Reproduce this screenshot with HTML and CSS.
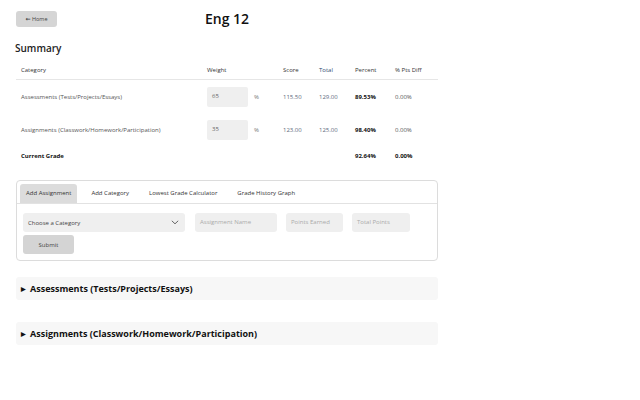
FILE: index.html
```html
<!DOCTYPE html>
<html>
<head>
<meta charset="utf-8">
<link rel="stylesheet" href="styles.css">
</head>
<body>
<div class="page">
  <header class="top">
    <button class="home"><span class="arrow">&#8592;</span> Home</button>
    <h1 class="title">Eng 12</h1>
  </header>
  <h2 class="summary">Summary</h2>
  <table class="grid">
    <colgroup>
      <col class="c1"><col class="c2"><col class="c3"><col class="c4"><col class="c5"><col class="c6">
    </colgroup>
    <thead>
      <tr><th>Category</th><th>Weight</th><th>Score</th><th class="tot">Total</th><th>Percent</th><th>% Pts Diff</th></tr>
    </thead>
    <tbody>
      <tr class="row">
        <td>Assessments (Tests/Projects/Essays)</td>
        <td><span class="wbox">65</span><span class="pct">%</span></td>
        <td class="num">115.50</td><td class="num">129.00</td><td class="b">89.53%</td><td>0.00%</td>
      </tr>
      <tr class="row">
        <td>Assignments (Classwork/Homework/Participation)</td>
        <td><span class="wbox">35</span><span class="pct">%</span></td>
        <td class="num">123.00</td><td class="num">125.00</td><td class="b">98.40%</td><td>0.00%</td>
      </tr>
      <tr class="cur">
        <td class="b">Current Grade</td><td></td><td></td><td></td><td class="b">92.64%</td><td class="b">0.00%</td>
      </tr>
    </tbody>
  </table>

  <section class="card">
    <nav class="tabs">
      <span class="tab active">Add Assignment</span>
      <span class="tab">Add Category</span>
      <span class="tab">Lowest Grade Calculator</span>
      <span class="tab">Grade History Graph</span>
    </nav>
    <div class="form">
      <div class="fields">
        <div class="select"><span>Choose a Category</span>
          <svg width="8" height="5" viewBox="0 0 8 5"><path d="M0.8 0.8 L4 3.8 L7.2 0.8" fill="none" stroke="#555" stroke-width="0.9"/></svg>
        </div>
        <div class="inp w82">Assignment Name</div>
        <div class="inp w57">Points Earned</div>
        <div class="inp w58">Total Points</div>
      </div>
      <button class="submit">Submit</button>
    </div>
  </section>

  <div class="det"><span class="tri">&#9654;</span>Assessments (Tests/Projects/Essays)</div>
  <div class="det second"><span class="tri">&#9654;</span>Assignments (Classwork/Homework/Participation)</div>
</div>
</body>
</html>
```
FILE: styles.css
```css
* { box-sizing: border-box; }
body {
  margin: 0;
  background: #fff;
  font-family: "Open Sans", "Noto Sans", sans-serif;
  color: #333;
}
.page {
  width: 422px;
  margin-left: 16px;
  padding-top: 11px;
}
.top {
  display: flex;
  align-items: center;
  height: 16px;
}
.home {
  width: 41px;
  height: 16px;
  border: 0;
  border-radius: 3px;
  background: #d5d5d5;
  color: #444;
  font-family: inherit;
  font-size: 5.5px;
  padding: 0;
}
.arrow {
  font-family: "DejaVu Sans", sans-serif;
  font-size: 6px;
  font-weight: 700;
}
.title {
  margin: 0 0 0 148px;
  font-size: 14px;
  font-weight: 600;
  color: #111;
  line-height: 16px;
}
.summary {
  margin: 14px 0 0 -1px;
  font-size: 10px;
  font-weight: 600;
  color: #222;
  line-height: 14px;
}
.grid {
  margin-top: 7px;
  width: 422px;
  border-collapse: collapse;
  table-layout: fixed;
  font-size: 6px;
  color: #555;
}
.c1 { width: 186px; }
.c2 { width: 76px; }
.c3 { width: 36px; }
.c4 { width: 36px; }
.c5 { width: 40px; }
.c6 { width: 48px; }
.grid th {
  text-align: left;
  font-weight: 500;
  color: #333;
  height: 17px;
  padding: 0 5px;
  border-bottom: 1px solid #e6e6e6;
}
.grid th.tot { color: #2c4a72; }
.grid td {
  padding: 0 5px;
  vertical-align: middle;
}
.row td { height: 33px; padding-top: 2px; }
.cur td { height: 22px; }
.grid .b { font-weight: 700; color: #111; }
.num { color: #5d6a7c; }
.wbox {
  display: inline-block;
  width: 41px;
  height: 20px;
  line-height: 18px;
  padding-left: 5px;
  background: #efefef;
  border-radius: 2px;
  vertical-align: middle;
  color: #666;
}
.pct {
  margin-left: 6px;
  vertical-align: middle;
  color: #777;
}
.card {
  margin-top: 13px;
  border: 1px solid #dcdcdc;
  border-radius: 4px;
  padding-bottom: 6px;
}
.tabs {
  display: flex;
  gap: 8px;
  padding: 3px 3px 0;
  border-bottom: 1px solid #e2e2e2;
  font-size: 6px;
  color: #333;
}
.tab {
  height: 19px;
  line-height: 19px;
  padding: 0 6px;
  border-radius: 3px 3px 0 0;
}
.tab.active { background: #dcdcdc; }
.form {
  padding: 9px 6px 0;
  display: flex;
  flex-direction: column;
  gap: 3px;
  align-items: flex-start;
}
.fields {
  display: flex;
  gap: 9px;
  font-size: 6px;
}
.select {
  width: 162px;
  height: 19px;
  background: #efefef;
  border-radius: 3px;
  display: flex;
  align-items: center;
  justify-content: space-between;
  padding: 0 6px 0 5px;
  color: #444;
  margin-right: 1px;
}
.inp {
  height: 19px;
  line-height: 19px;
  background: #efefef;
  border-radius: 3px;
  padding-left: 5px;
  color: #aaa;
}
.w82 { width: 82px; }
.w57 { width: 57px; }
.w58 { width: 58px; }
.submit {
  width: 51px;
  height: 19px;
  border: 0;
  border-radius: 3px;
  background: #d4d4d4;
  color: #444;
  font-family: inherit;
  font-size: 6px;
  padding: 0;
}
.det {
  margin-top: 16px;
  height: 23px;
  background: #f7f7f7;
  border-radius: 3px;
  display: flex;
  align-items: center;
  padding-left: 5px;
  font-size: 9px;
  font-weight: 700;
  color: #111;
}
.det.second { margin-top: 22px; }
.tri {
  font-size: 6px;
  margin-right: 4px;
}
```
